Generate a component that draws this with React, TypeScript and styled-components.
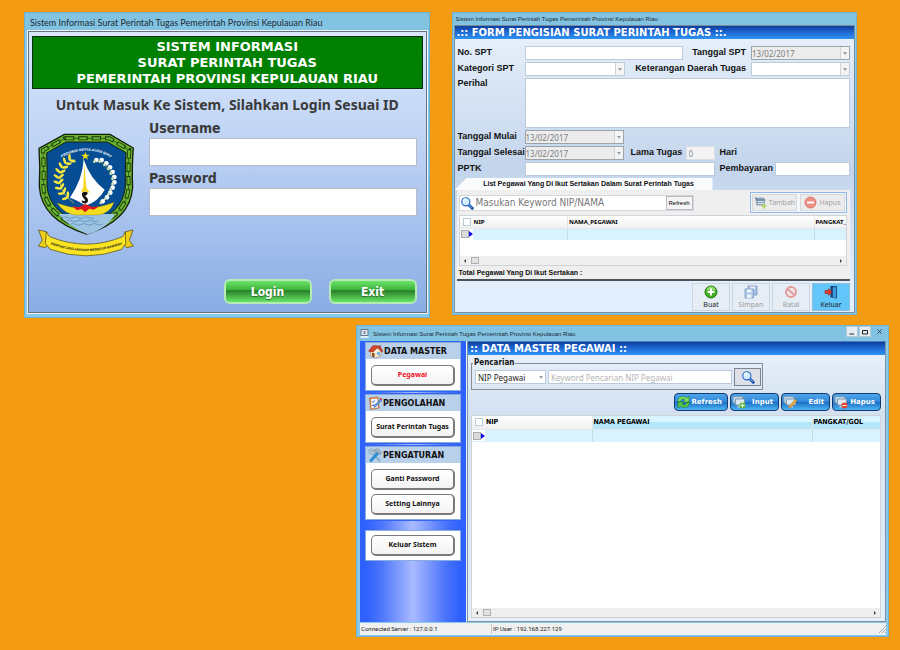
import React from 'react';
import styled, { createGlobalStyle } from 'styled-components';

const verdana = '"DejaVu Sans", Verdana, sans-serif';
const tahoma = '"DejaVu Sans Condensed", Tahoma, sans-serif';
const noto = '"Noto Sans", sans-serif';
const arial = '"Liberation Sans", Arial, sans-serif';

const Global = createGlobalStyle`
  * { box-sizing: border-box; }
  body { margin: 0; background: #f39c12; color: #111; font-family: ${arial}; }
  button, input, select, textarea { font-family: inherit; margin: 0; padding: 0; border-radius: 0; }
  fieldset { margin: 0; padding: 0; min-width: 0; }
  svg { display: block; flex: none; }
`;

/* ---------- desktop and window frames ---------- */

const Desktop = styled.main`
  min-height: 100vh;
  padding: 12px 11px 12px 24px;
  background: #f39c12;
`;
const TopRow = styled.div`
  display: grid;
  grid-template-columns: 1fr 1fr;
  align-items: start;
  gap: 22px;
  padding-right: 32px;
`;
const BottomRow = styled.div`
  padding: 7px 0 0 332px;
`;
const Window = styled.section`
  display: flex;
  flex-direction: column;
  min-width: 0;
  background: #87c9ea;
  border: 1px solid #6cb0d2;
`;
const TitleBar = styled.header<{ $large?: boolean }>`
  display: flex;
  align-items: center;
  height: ${p => (p.$large ? 18 : 12)}px;
  padding-left: ${p => (p.$large ? 5 : 3)}px;
  background: #83c3e2;
  color: #1c2a35;
  font-family: ${p => (p.$large ? 'Lato, sans-serif' : arial)};
  font-size: ${p => (p.$large ? 9 : 6)}px;
  white-space: nowrap;
`;
const BlueHeading = styled.h2`
  margin: 0;
  padding-left: 2px;
  height: 13px;
  background: linear-gradient(#0d3f9c, #1b61cd 40%, #2e94f5);
  color: #fff;
  font: bold 10px/14px ${verdana};
  white-space: pre;
`;

/* ---------- login window ---------- */

const LoginPane = styled.form`
  display: flex;
  flex-direction: column;
  margin: 0 2px 4px 3px;
  padding: 4px 3px 8px;
  border: 1px solid #66727f;
  outline: 1px solid #eef6fb;
  background: linear-gradient(#d9e7fb, #bdd2f4 42%, #8aade5);
`;
const Banner = styled.h1`
  margin: 0;
  padding: 2px 0 1px;
  border: 1px solid #0c2c0c;
  background: #008000;
  color: #fff;
  font: bold 13px/16px ${verdana};
  text-align: center;
`;
const Prompt = styled.p`
  margin: 6px 0 4px;
  color: #3a3a3a;
  font: bold 14px/20px ${noto};
  text-align: center;
  white-space: nowrap;
`;
const LoginBody = styled.div`
  display: grid;
  grid-template-columns: 98px 1fr;
  gap: 14px;
  padding: 0 6px 0 5px;
`;
const EmblemBox = styled.div`
  padding-top: 13px;
`;
const Credentials = styled.div`
  display: flex;
  flex-direction: column;
`;
const BigLabel = styled.label`
  color: #3a3a3a;
  font: bold 14px/19px ${tahoma};
`;
const BigInput = styled.input`
  width: 100%;
  height: 28px;
  margin-bottom: 3px;
  padding: 0 6px;
  border: 1px solid #b7bcc8;
  background: #fff;
  font-size: 14px;
`;
const LoginActions = styled.div`
  display: flex;
  justify-content: flex-end;
  gap: 17px;
  padding: 21px 6px 0 0;
`;
const GreenButton = styled.button`
  width: 88px;
  height: 25px;
  border: 2px solid #b5eab4;
  border-radius: 6px;
  background: linear-gradient(#6be36a, #3fb63f 40%, #2a7f2b 46%, #3a9a3a 60%, #66e465);
  color: #fff;
  font: bold 12px/18px ${tahoma};
  text-shadow: 0 1px 1px #2d6f2d;
`;

/* ---------- shared form parts ---------- */

const Row = styled.div<{ $top?: boolean }>`
  display: flex;
  align-items: ${p => (p.$top ? 'flex-start' : 'center')};
`;
const Label = styled.label<{ $w?: number; $fill?: boolean }>`
  flex: ${p => (p.$fill ? '1' : 'none')};
  width: ${p => (p.$w ? p.$w + 'px' : 'auto')};
  padding-right: ${p => (p.$fill ? 5 : 0)}px;
  padding-bottom: 2px;
  text-align: ${p => (p.$fill ? 'right' : 'left')};
  font: bold 9px/10px ${arial};
  white-space: nowrap;
`;
const Field = styled.input<{ $w?: number }>`
  flex: ${p => (p.$w ? 'none' : '1')};
  width: ${p => (p.$w ? p.$w + 'px' : 'auto')};
  min-width: 0;
  height: 14px;
  padding: 0 2px;
  border: 1px solid #bccada;
  background: #fff;
  font: 8px/12px ${noto};
  &:disabled { background: #f3f3f3; color: #8a8a8a; border-color: #dadfe6; }
`;
const Memo = styled.textarea`
  flex: 1;
  min-width: 0;
  height: 50px;
  border: 1px solid #bccada;
  background: #fff;
  font: 8px/12px ${noto};
  resize: none;
`;
const ComboBox = styled.span<{ $w: number; $date?: boolean }>`
  display: flex;
  flex: none;
  width: ${p => p.$w}px;
  height: 14px;
  border: 1px solid ${p => (p.$date ? '#9ba3ab' : '#bccada')};
  background: ${p => (p.$date ? '#ececec' : '#fff')};
`;
const ComboSelect = styled.select<{ $dark?: boolean }>`
  flex: 1;
  min-width: 0;
  padding-left: ${p => (p.$dark ? 2 : 0)}px;
  border: 0;
  appearance: none;
  background: transparent;
  color: ${p => (p.$dark ? '#222' : '#7d7d7d')};
  font: 8px/11px ${noto};
  opacity: 1;
`;
const ComboArrow = styled.span<{ $plain?: boolean }>`
  display: grid;
  place-items: center;
  width: 9px;
  border-left: ${p => (p.$plain ? '0' : '1px solid #cfd3d8')};
  background: ${p => (p.$plain ? 'transparent' : '#f4f4f4')};
`;

type ComboProps = { id: string; w: number; date?: boolean; value?: string; plain?: boolean; label?: string };
function Combo({ id, w, date, value, plain, label }: ComboProps) {
  return (
    <ComboBox $w={w} $date={date}>
      <ComboSelect id={id} aria-label={label} disabled={date} $dark={plain} defaultValue={value ?? ''}>
        <option>{value ?? ''}</option>
      </ComboSelect>
      <ComboArrow $plain={plain}>
        <svg width="4" height="3" viewBox="0 0 4 3"><path d="M0 0h4L2 3z" fill="#9a9fa4" /></svg>
      </ComboArrow>
    </ComboBox>
  );
}

/* ---------- assignment-letter form window ---------- */

const FormPane = styled.form`
  display: flex;
  flex-direction: column;
  margin: 0 1px 1px;
  border: 1px solid #7c8b99;
  background: linear-gradient(#e9f1fb, #c3d5ec 50%, #e2eefb 90%);
`;
const FormRows = styled.div`
  display: flex;
  flex-direction: column;
  gap: 2px;
  padding: 7px 4px 2px 3px;
`;
const Spacer = styled.span<{ $w?: number }>`
  flex: ${p => (p.$w ? 'none' : '1')};
  width: ${p => p.$w ?? 0}px;
`;
const Tab = styled.h3`
  width: 258px;
  height: 12px;
  margin: 0;
  padding: 0 0 0 10px;
  background: #fafbfc;
  clip-path: polygon(0 100%, 12px 0, 100% 0, 100% 100%);
  font: bold 7px/12px ${arial};
  text-align: center;
  white-space: nowrap;
`;
const TabPage = styled.div`
  display: flex;
  flex-direction: column;
  margin: 0 4px 0 2px;
  padding: 2px 3px 0 2px;
  background: #efefef;
  border-bottom: 2px solid #4a525a;
`;
const SearchRow = styled.div`
  display: flex;
  align-items: center;
  justify-content: space-between;
  margin-bottom: 2px;
`;
const SearchBox = styled.div`
  display: flex;
  align-items: center;
  width: 235px;
  height: 16px;
  border: 1px solid #d3d6da;
  background: #fff;
`;
const SearchInput = styled.input`
  flex: 1;
  min-width: 0;
  padding-left: 2px;
  border: 0;
  background: transparent;
  font: 10px/14px ${tahoma};
  &::placeholder { color: #777; opacity: 1; }
`;
const TinyButton = styled.button`
  width: 27px;
  height: 14px;
  border: 1px solid #b8bcc0;
  background: #f5f5f5;
  font: 6px/10px ${arial};
`;
const ButtonGroup = styled.div`
  display: flex;
  gap: 3px;
  padding: 1px;
  border: 1px solid #8fb8ee;
  background: #f3f6fa;
`;
const FlatButton = styled.button`
  display: flex;
  align-items: center;
  justify-content: center;
  gap: 2px;
  width: 45px;
  height: 17px;
  border: 1px solid #d6d9dd;
  background: #ececec;
  color: #a2a2a2;
  font: 7px/10px ${noto};
`;
const Total = styled.p`
  margin: 0;
  font: bold 7px/13px ${arial};
`;
const ActionBar = styled.div`
  display: flex;
  justify-content: flex-end;
  gap: 2px;
  padding: 2px 4px 1px 0;
`;
const ActionButton = styled.button<{ $active?: boolean }>`
  display: flex;
  flex-direction: column;
  align-items: center;
  justify-content: space-between;
  width: 38px;
  height: 28px;
  padding: 1px 0 1px;
  border: 1px solid ${p => (p.$active ? '#8dbdd9' : '#cdd6df')};
  background: ${p => (p.$active ? '#63c6fa' : '#e6edf4')};
  color: #222;
  font: 7px/9px ${noto};
  &:disabled { color: #9a9fa5; }
  &:disabled svg { opacity: 0.5; }
`;

/* ---------- data grids ---------- */

const GridBox = styled.div<{ $grow?: boolean }>`
  display: flex;
  flex-direction: column;
  justify-content: space-between;
  height: ${p => (p.$grow ? 203 : 51)}px;
  border: 1px solid #cfd4d9;
  background: #fff;
`;
const Table = styled.table<{ $large?: boolean }>`
  width: 100%;
  table-layout: fixed;
  border-collapse: collapse;
  color: #000;
  font: bold ${p => (p.$large ? 7 : 6)}px/10px ${p => (p.$large ? tahoma : noto)};
  th, td { height: ${p => (p.$large ? 13 : 12)}px; padding: 0 0 0 1px; text-align: left; white-space: nowrap; }
  th { background: linear-gradient(#fff, #f0f0f0); border-right: 1px solid #e4e6e8; border-bottom: 1px solid #e2e8ec; }
  td { background: #d8f2fe; border-right: 1px solid #c3dbe6; }
  th:last-child, td:last-child { border-right: 0; }
`;
const HotHeader = styled.th`
  && { background: linear-gradient(#d9f4ff 45%, #b5e7fb 50%); }
`;
const Marker = styled.span`
  display: flex;
  align-items: center;
  gap: 3px;
  padding-left: 2px;
`;
const Tick = styled.input<{ $muted?: boolean }>`
  appearance: none;
  flex: none;
  width: 8px;
  height: 8px;
  border: 1px solid ${p => (p.$muted ? '#a9adb2' : '#b9cdd4')};
  background: ${p => (p.$muted ? '#dcdcdc' : '#fff')};
`;
const Cell = styled.div`
  display: flex;
  align-items: center;
  width: 13px;
  margin-left: -1px;
  padding-left: 1px;
  height: 11px;
  background: #fff;
`;
const Cols = styled.col<{ $w?: number }>`
  width: ${p => (p.$w ? p.$w + 'px' : 'auto')};
`;
const ScrollTrack = styled.div`
  display: flex;
  align-items: center;
  gap: 5px;
  height: 9px;
  padding: 0 4px;
  background: #efefef;
`;
const Thumb = styled.span`
  width: 8px;
  height: 7px;
  border: 1px solid #b0b0b0;
  background: #e2e2e2;
`;
const Scrollbar = () => (
  <ScrollTrack>
    <svg width="2" height="4" viewBox="0 0 2 4"><path d="M2 0v4L0 2z" fill="#444" /></svg>
    <Thumb />
    <Spacer />
    <svg width="2" height="4" viewBox="0 0 2 4"><path d="M0 0v4l2-2z" fill="#444" /></svg>
  </ScrollTrack>
);
const RowPointer = () => <svg width="4" height="6" viewBox="0 0 4 6"><path d="M0 0l4 3-4 3z" fill="#1010e8" /></svg>;

function DataGrid({ large, heads, widths }: { large?: boolean; heads: string[]; widths: number[] }) {
  return (
    <GridBox $grow={large}>
      <Table $large={large}>
        <colgroup><Cols $w={widths[0]} /><Cols /><Cols $w={widths[1]} /></colgroup>
        <thead>
          <tr>
            <th><Marker><Tick type="checkbox" aria-label="Pilih semua" />{heads[0]}</Marker></th>
            {large ? <HotHeader>{heads[1]}</HotHeader> : <th>{heads[1]}</th>}
            {large ? <HotHeader>{heads[2]}</HotHeader> : <th>{heads[2]}</th>}
          </tr>
        </thead>
        <tbody>
          <tr>
            <td><Cell><Tick $muted type="checkbox" aria-label="Pilih baris" /><RowPointer /></Cell></td>
            <td /><td />
          </tr>
        </tbody>
      </Table>
      <Scrollbar />
    </GridBox>
  );
}

/* ---------- main window ---------- */

const MainTitle = styled(TitleBar)`
  height: 15px;
  gap: 4px;
  padding: 0 2px 0 3px;
`;
const Caption = styled.span`
  flex: 1;
`;
const CaptionButton = styled.button<{ $flat?: boolean }>`
  display: grid;
  place-items: center;
  align-self: flex-start;
  width: ${p => (p.$flat ? 14 : 12)}px;
  height: 11px;
  margin-left: -3px;
  border: ${p => (p.$flat ? '0' : '1px solid #b8cbd6')};
  background: ${p => (p.$flat ? 'transparent' : '#e4edf2')};
`;
const Workspace = styled.div`
  display: grid;
  grid-template-columns: 106px 1fr;
  gap: 1px;
  margin: 0 2px 0 3px;
  background: #e8f3fb;
`;
const Sidebar = styled.nav`
  display: flex;
  flex-direction: column;
  gap: 3px;
  padding: 1px 5px 0;
  background: linear-gradient(90deg, #2d60fd 5%, #4c75fb 20%, #a9baff 50%, #4c75fb 80%, #2d60fd 95%);
`;
const MenuGroup = styled.section<{ $apart?: boolean }>`
  display: flex;
  flex-direction: column;
  margin-top: ${p => (p.$apart ? 7 : 0)}px;
  padding-bottom: 4px;
  border: 1px solid #86abe0;
  background: #fff;
  box-shadow: ${p => (p.$apart ? 'none' : '0 0 0 1px #3364f4')};
`;
const MenuTitle = styled.h3`
  display: flex;
  align-items: center;
  gap: 1px;
  height: 16px;
  margin: 0 0 2px;
  padding-left: 2px;
  background: #b9d0ea;
  font: bold 8px/12px ${verdana};
  white-space: nowrap;
`;
const MenuName = styled.span`
  padding-top: 2px;
`;
const MenuButton = styled.button<{ $current?: boolean }>`
  height: 21px;
  margin: 4px 5px 0;
  border: 1px solid #7a7a7a;
  border-right-width: 2px;
  border-bottom-width: 2px;
  border-radius: 5px;
  background: linear-gradient(#fff, #f3f3f3);
  color: ${p => (p.$current ? '#f20d1c' : '#111')};
  font: bold 7px/12px ${noto};
  white-space: nowrap;
`;
const Content = styled.section`
  display: flex;
  flex-direction: column;
  min-width: 0;
  padding-bottom: 3px;
  border: 1px solid #7d91a5;
  border-top-color: #4a7cc0;
  background: linear-gradient(#eaf2fb, #d4e1f1 70px, #e4effa);
`;
const ContentBody = styled.div`
  padding: 3px 4px 0 3px;
`;
const SearchSet = styled.fieldset`
  display: block;
  width: 292px;
  height: 32px;
  border: 1px solid #858f98;
`;
const Legend = styled.legend`
  margin-left: 1px;
  padding: 0 1px;
  font: bold 8px/10px ${tahoma};
`;
const SearchLine = styled.div`
  display: flex;
  align-items: center;
  gap: 2px;
  margin-left: 3px;
`;
const KeywordInput = styled(Field)`
  &::placeholder { color: #b5b5b5; opacity: 1; }
`;
const FindButton = styled.button`
  display: grid;
  place-items: center;
  width: 27px;
  height: 18px;
  margin-right: 1px;
  border: 1px solid #7b858f;
  background: #dde0e6;
`;
const Toolbar = styled.div`
  display: flex;
  justify-content: flex-end;
  gap: 2px;
  margin: 3px 0 4px;
`;
const GlossButton = styled.button<{ $wide?: boolean }>`
  display: flex;
  align-items: center;
  justify-content: space-between;
  width: ${p => (p.$wide ? 54 : 49)}px;
  height: 18px;
  padding: 0 5px 0 1px;
  border: 1px solid #123c70;
  border-radius: 4px;
  background: linear-gradient(#4fa5ea, #2f88d9 48%, #1b6ec4 52%, #4db4f5);
  color: #fff;
  font: bold 7px/12px ${verdana};
`;
const StatusBar = styled.footer`
  display: grid;
  grid-template-columns: 132px 1fr auto;
  align-items: center;
  height: 12px;
  margin: 1px 2px 1px 3px;
  background: #f0f0f0;
  color: #222;
  font: 6px/10px Roboto, sans-serif;
`;
const StatusPart = styled.span`
  padding-left: 1px;
  border-right: 1px solid #c8c8c8;
  & + & { border-right: 0; }
`;

/* ---------- icons ---------- */

const Magnifier = ({ s }: { s: number }) => (
  <svg width={s} height={s} viewBox="0 0 24 24">
    <path d="M14 14l7 7" stroke="#17439c" strokeWidth="5" strokeLinecap="round" />
    <path d="M15 15l5 5" stroke="#58a8ee" strokeWidth="2" strokeLinecap="round" />
    <circle cx="10" cy="10" r="7" fill="#d4efff" stroke="#2a68c8" strokeWidth="2" />
    <path d="M6 9a4 4 0 014-4" fill="none" stroke="#fff" strokeWidth="2" />
  </svg>
);
const HouseIcon = () => (
  <svg width="15" height="13" viewBox="0 0 30 26">
    <path d="M5 11v11l10 4 11-5V10L16 5z" fill="#fbe9cf" stroke="#96603a" />
    <path d="M1 12L10 1l13 1 7 10-3 2-8-9-9 9-8-1z" fill="#d5442c" stroke="#8b2318" />
    <path d="M22 1h4v5h-4z" fill="#a44" />
    <path d="M8 16h5v9l-5-2z" fill="#8b4a20" /><path d="M18 14h6v6h-6z" fill="#6cb4ea" />
  </svg>
);
const NoteIcon = () => (
  <svg width="14" height="14" viewBox="0 0 28 28">
    <path d="M3 4l17-2 2 22-17 3z" fill="#e4873a" stroke="#99501c" />
    <path d="M6 6l13-1 1 18-13 2z" fill="#f4f8ff" />
    <path d="M8 11l2 2 3-4M8 18l2 2 3-4" stroke="#3164c0" strokeWidth="2" fill="none" />
    <path d="M26 5l2 3-12 13-4 2 1-4z" fill="#5aa0ea" stroke="#28599c" /><path d="M24 4l4 4" stroke="#d33" strokeWidth="3" />
  </svg>
);
const ToolsIcon = () => (
  <svg width="14" height="14" viewBox="0 0 28 28">
    <path d="M8 9l15 16" stroke="#8fb2cc" strokeWidth="5" strokeLinecap="round" />
    <path d="M2 10V4l5-3-1 5 4 1 2-4 3 6-5 4z" fill="#b9cfdf" stroke="#638aa5" />
    <path d="M20 10L6 25" stroke="#2f8fd6" strokeWidth="6" strokeLinecap="round" />
    <path d="M12 4l7-3 8 7-3 6-5-6-5 1z" fill="#a7b7c4" stroke="#617c90" />
  </svg>
);
const RefreshIcon = () => (
  <svg width="15" height="14" viewBox="0 0 28 28">
    <path d="M2 13C3 3 14 0 20 6l5-4v12H13l4-4C13 6 9 8 8 13z" fill="#84e05a" stroke="#166b1b" />
    <path d="M26 15c-1 10-12 13-18 7l-5 4V14h12l-4 4c4 4 8 2 9-3z" fill="#58cc45" stroke="#166b1b" />
  </svg>
);
const RecordIcon = ({ kind }: { kind: 'add' | 'edit' | 'remove' }) => (
  <svg width="14" height="14" viewBox="0 0 28 28">
    <path d="M2 3h19v13H2z" fill="#b6d8f2" stroke="#8298ac" strokeWidth="2" />
    <path d="M7 8h18v12H7z" fill="#dce9f3" stroke="#8298ac" strokeWidth="2" />
    <path d="M12 21h8v4H10z" fill="#c4ccd4" />
    {kind === 'add' && <><circle cx="21" cy="21" r="6" fill="#58b82e" /><path d="M21 17v8M17 21h8" stroke="#fff" strokeWidth="2" /></>}
    {kind === 'edit' && <path d="M25 8L13 22l-2 4 4-1L28 12z" fill="#f4b03c" stroke="#935b17" />}
    {kind === 'remove' && <><circle cx="21" cy="21" r="6" fill="#e5412d" /><path d="M17 21h8" stroke="#fff" strokeWidth="2" /></>}
  </svg>
);
const PlusIcon = () => (
  <svg width="14" height="14" viewBox="0 0 28 28">
    <circle cx="14" cy="14" r="12" fill="#3fae22" stroke="#1f7a12" strokeWidth="2" />
    <path d="M5 11a9 8 0 0118 0z" fill="#8edc6c" /><path d="M14 7v14M7 14h14" stroke="#fff" strokeWidth="4" />
  </svg>
);
const DisksIcon = () => (
  <svg width="14" height="14" viewBox="0 0 28 28">
    <path d="M8 2h18v18H8z" fill="#5c93d4" stroke="#2f5f9e" strokeWidth="2" /><path d="M12 3h10v6H12z" fill="#eef" />
    <path d="M2 8h17v18H2z" fill="#6ea3de" stroke="#2f5f9e" strokeWidth="2" /><path d="M6 9h9v6H6zM6 19h9v7H6z" fill="#f4f7fc" />
  </svg>
);
const BanIcon = () => (
  <svg width="14" height="14" viewBox="0 0 28 28">
    <circle cx="14" cy="14" r="10" fill="#fbe3e1" stroke="#dd4b44" strokeWidth="4" /><path d="M7 8l14 12" stroke="#dd4b44" strokeWidth="4" />
  </svg>
);
const DoorIcon = () => (
  <svg width="14" height="14" viewBox="0 0 28 28">
    <path d="M13 2h13v23H13z" fill="#173c66" /><path d="M17 5l8-3v25l-8-3z" fill="#3d9be2" stroke="#153a63" />
    <path d="M2 11h7V7l7 7-7 7v-4H2z" fill="#e6372a" stroke="#8b1c14" />
  </svg>
);
const MinusIcon = () => (
  <svg width="13" height="13" viewBox="0 0 26 26"><circle cx="13" cy="13" r="11" fill="#ee8f86" stroke="#dd776e" strokeWidth="2" /><path d="M6 13h14" stroke="#fff" strokeWidth="4" /></svg>
);
const CartIcon = () => (
  <svg width="13" height="13" viewBox="0 0 26 26">
    <path d="M2 3h17l3 3v13H5z" fill="#8ea5ba" /><path d="M2 3l4 5h17" fill="none" stroke="#617e98" strokeWidth="2" />
    <path d="M8 11h12M8 15h12" stroke="#d9e4ee" strokeWidth="2" /><path d="M20 15v10M15 20h10" stroke="#b8d374" strokeWidth="4" />
  </svg>
);
const AppIcon = () => (
  <svg width="9" height="9" viewBox="0 0 18 18"><path d="M2 1h14v12H2z" fill="#dfe8ee" stroke="#667684" strokeWidth="2" /><path d="M7 4h4v6H7z" fill="#7890a4" /><path d="M1 16h16" stroke="#f8fbfd" strokeWidth="3" /></svg>
);

const wheat = [[134, 122], [121, 132], [111, 145], [104, 160], [101, 176], [102, 192], [107, 208], [116, 222], [128, 235]];
const cotton = [[214, 122], [230, 122], [244, 132], [255, 144], [263, 158], [268, 173], [268, 189], [263, 205], [256, 220], [246, 234], [233, 246]];
const chain = 'M120 57h133l60 35q-4 60-2 110-6 91-126 129Q62 292 55 202q2-55-1-109z';
const Emblem = () => (
  <svg width="98" height="126" viewBox="36 38 294 378" role="img" aria-label="Lambang provinsi">
    <defs>
      <path id="arcTop" d="M98 122Q184 66 270 122" />
      <path id="arcRibbon" d="M72 373Q184 417 296 373" />
    </defs>
    <path d="M118 45h137l70 41q-5 62-2 117-6 101-138 141Q49 302 43 202q3-60-1-115z" fill="#6ab42f" stroke="#14200d" strokeWidth="4" />
    <path d={chain} fill="none" stroke="#1a330c" strokeWidth="12" strokeDasharray="28 12" />
    <path d={chain} fill="none" stroke="#6ab42f" strokeWidth="7" strokeDasharray="22 18" strokeDashoffset="-3" />
    <path d={chain} fill="none" stroke="#1a330c" strokeWidth="2" strokeDasharray="16 24" strokeDashoffset="-26" />
    <path d="M123 68h124l56 32q-3 50-2 102-7 82-116 118Q74 283 66 202q1-50-1-101z" fill="#064d93" stroke="#14200d" strokeWidth="3" />
    <text fill="#fff" fontFamily="Liberation Sans, sans-serif" fontWeight="bold" fontSize="11"><textPath href="#arcTop" startOffset="50%" textAnchor="middle">PROVINSI KEPULAUAN RIAU</textPath></text>
    <path d="M181 97l3 9h10l-8 6 3 9-8-6-8 6 3-9-8-6h10z" fill="#f7dc18" />
    <path d="M150 120Q62 186 146 251" fill="none" stroke="#f2df33" strokeWidth="2" />
    {wheat.map(([x, y], i) => (
      <g key={i} transform={`translate(${x} ${y}) rotate(${52 - i * 13})`}>
        <ellipse cx="-8" rx="10" ry="4" transform="rotate(35)" fill="#f6e83e" /><ellipse cx="9" rx="10" ry="4" transform="rotate(-35)" fill="#f6e83e" />
      </g>
    ))}
    <path d="M218 120Q307 183 229 250" fill="none" stroke="#51913d" strokeWidth="3" />
    {cotton.map(([x, y], i) => <g key={i}><circle cx={x} cy={y} r="7" fill="#fff" /><circle cx={x - 6} cy={y + 5} r="4" fill="#e4f0df" stroke="#397738" strokeWidth="1" /></g>)}
    <path d="M176 120Q196 180 239 211q-18 35-58 48-18-14-46-24 38-55 41-115z" fill="#fff" />
    <path d="M178 135l6 70 11 15-14-4-12 3 6-18z" fill="#f6d51a" />
    <path d="M171 221q10-7 18 0-5 8-9 10 12 6 8 17-8 9-17 1l-1-6 8 3q5-3-1-8-8-8-6-17z" fill="#15120f" />
    <path d="M100 284h170q-11 24-38 41-20 14-45 20-58-25-87-61z" fill="#9cc3e2" />
    {[295, 305, 315].map((y, i) => <path key={y} d={`M${112 + i * 12} ${y}q8-5 16 0t16 0 16 0 16 0 16 0 16 0`} fill="none" stroke="#4f86b6" strokeWidth="2" />)}
    <path d="M96 251q82 32 172-2-16 36-49 38h-67q-33-3-56-36z" fill="#f3dc1d" stroke="#806816" />
    <path d="M141 261l21 3 19-10 21 9 21-2-17 10-13-3-13 11-11-10-13 4z" fill="#df1723" />
    <path d="M41 332l22 5 14 31-16 17-21-5 12-17zM324 332l-22 5-11 31 14 17 20-5-12-17z" fill="#edce1b" stroke="#49400e" strokeWidth="2" />
    <path d="M64 337l10 15q111 45 219 0l8-15 1 36-12 17q-107 39-214 0l-15-17z" fill="#fae424" stroke="#49400e" strokeWidth="2" />
    <text fill="#242012" fontFamily="Liberation Sans, sans-serif" fontWeight="bold" fontSize="10"><textPath href="#arcRibbon" startOffset="50%" textAnchor="middle">BERPANCANG AMANAH BERSAUH MARWAH</textPath></text>
  </svg>
);

/* ---------- windows ---------- */

const APP = 'Sistem Informasi Surat Perintah Tugas Pemerintah Provinsi Kepulauan Riau';
const stop = (e: React.FormEvent) => e.preventDefault();

const LoginWindow = () => (
  <Window>
    <TitleBar $large>{APP}</TitleBar>
    <LoginPane onSubmit={stop}>
      <Banner>SISTEM INFORMASI<br />SURAT PERINTAH TUGAS<br />PEMERINTAH PROVINSI KEPULAUAN RIAU</Banner>
      <Prompt>Untuk Masuk Ke Sistem, Silahkan Login Sesuai ID</Prompt>
      <LoginBody>
        <EmblemBox><Emblem /></EmblemBox>
        <Credentials>
          <BigLabel htmlFor="user">Username</BigLabel>
          <BigInput id="user" />
          <BigLabel htmlFor="pass">Password</BigLabel>
          <BigInput id="pass" type="password" />
        </Credentials>
      </LoginBody>
      <LoginActions>
        <GreenButton type="submit">Login</GreenButton>
        <GreenButton type="button">Exit</GreenButton>
      </LoginActions>
    </LoginPane>
  </Window>
);

const FormWindow = () => (
  <Window>
    <TitleBar>{APP}</TitleBar>
    <FormPane onSubmit={stop}>
      <BlueHeading>.:: FORM PENGISIAN SURAT PERINTAH TUGAS ::.</BlueHeading>
      <FormRows>
        <Row>
          <Label $w={67} htmlFor="no">No. SPT</Label><Field id="no" $w={158} />
          <Label $fill htmlFor="tgl">Tanggal SPT</Label><Combo id="tgl" w={99} date value="13/02/2017" />
        </Row>
        <Row>
          <Label $w={67} htmlFor="kat">Kategori SPT</Label><Combo id="kat" w={100} />
          <Label $fill htmlFor="ket">Keterangan Daerah Tugas</Label><Combo id="ket" w={99} />
        </Row>
        <Row $top><Label $w={67} htmlFor="hal">Perihal</Label><Memo id="hal" /></Row>
        <Row><Label $w={67} htmlFor="mulai">Tanggal Mulai</Label><Combo id="mulai" w={99} date value="13/02/2017" /></Row>
        <Row>
          <Label $w={67} htmlFor="selesai">Tanggal Selesai</Label><Combo id="selesai" w={99} date value="13/02/2017" />
          <Spacer $w={7} /><Label $w={55} htmlFor="lama">Lama Tugas</Label><Field id="lama" $w={29} disabled defaultValue="0" />
          <Spacer $w={5} /><Label as="span">Hari</Label>
        </Row>
        <Row>
          <Label $w={67} htmlFor="pptk">PPTK</Label><Field id="pptk" $w={190} />
          <Spacer $w={5} /><Label $w={55} htmlFor="bayar">Pembayaran</Label><Field id="bayar" />
        </Row>
      </FormRows>
      <Tab>List Pegawai Yang Di Ikut Sertakan Dalam Surat Perintah Tugas</Tab>
      <TabPage>
        <SearchRow>
          <SearchBox>
            <Magnifier s={14} />
            <SearchInput aria-label="Kata kunci" placeholder="Masukan Keyword NIP/NAMA" />
            <TinyButton type="button">Refresh</TinyButton>
          </SearchBox>
          <ButtonGroup>
            <FlatButton type="button" disabled><CartIcon />Tambah</FlatButton>
            <FlatButton type="button" disabled><MinusIcon />Hapus</FlatButton>
          </ButtonGroup>
        </SearchRow>
        <DataGrid heads={['NIP', 'NAMA_PEGAWAI', 'PANGKAT_']} widths={[108, 32]} />
        <Total>Total Pegawai Yang Di Ikut Sertakan :</Total>
      </TabPage>
      <ActionBar>
        <ActionButton type="button"><PlusIcon />Buat</ActionButton>
        <ActionButton type="button" disabled><DisksIcon />Simpan</ActionButton>
        <ActionButton type="button" disabled><BanIcon />Batal</ActionButton>
        <ActionButton type="button" $active><DoorIcon />Keluar</ActionButton>
      </ActionBar>
    </FormPane>
  </Window>
);

const MainWindow = () => (
  <Window>
    <MainTitle>
      <AppIcon />
      <Caption>{APP}</Caption>
      <CaptionButton aria-label="Minimize"><svg width="6" height="6" viewBox="0 0 12 12"><path d="M1 10h9" stroke="#222" strokeWidth="2" /></svg></CaptionButton>
      <CaptionButton aria-label="Maximize"><svg width="6" height="6" viewBox="0 0 12 12"><path d="M1 3h10v7H1z" fill="none" stroke="#222" strokeWidth="2" /></svg></CaptionButton>
      <CaptionButton $flat aria-label="Close"><svg width="5" height="5" viewBox="0 0 10 10"><path d="M1 1l8 8m0-8l-8 8" stroke="#345" strokeWidth="2" /></svg></CaptionButton>
    </MainTitle>
    <Workspace>
      <Sidebar>
        <MenuGroup>
          <MenuTitle><HouseIcon /><MenuName>DATA MASTER</MenuName></MenuTitle>
          <MenuButton $current>Pegawai</MenuButton>
        </MenuGroup>
        <MenuGroup>
          <MenuTitle><NoteIcon /><MenuName>PENGOLAHAN</MenuName></MenuTitle>
          <MenuButton>Surat Perintah Tugas</MenuButton>
        </MenuGroup>
        <MenuGroup>
          <MenuTitle><ToolsIcon /><MenuName>PENGATURAN</MenuName></MenuTitle>
          <MenuButton>Ganti Password</MenuButton>
          <MenuButton>Setting Lainnya</MenuButton>
        </MenuGroup>
        <MenuGroup $apart><MenuButton>Keluar Sistem</MenuButton></MenuGroup>
      </Sidebar>
      <Content>
        <BlueHeading>:: DATA MASTER PEGAWAI ::</BlueHeading>
        <ContentBody>
          <SearchSet>
            <Legend>Pencarian</Legend>
            <SearchLine>
              <Combo id="by" label="Kolom pencarian" w={71} value="NIP Pegawai" plain />
              <KeywordInput aria-label="Keyword" placeholder="Keyword Pencarian NIP Pegawai" />
              <FindButton aria-label="Cari"><Magnifier s={14} /></FindButton>
            </SearchLine>
          </SearchSet>
          <Toolbar>
            <GlossButton $wide><RefreshIcon />Refresh</GlossButton>
            <GlossButton><RecordIcon kind="add" />Input</GlossButton>
            <GlossButton><RecordIcon kind="edit" />Edit</GlossButton>
            <GlossButton><RecordIcon kind="remove" />Hapus</GlossButton>
          </Toolbar>
          <DataGrid large heads={['NIP', 'NAMA PEGAWAI', 'PANGKAT/GOL']} widths={[120, 68]} />
        </ContentBody>
      </Content>
    </Workspace>
    <StatusBar>
      <StatusPart>Connected Server : 127.0.0.1</StatusPart>
      <StatusPart>IP User : 192.168.227.129</StatusPart>
      <svg width="8" height="8" viewBox="0 0 8 8"><path d="M1 8l7-7M4 8l4-4M7 8l1-1" stroke="#9aa" /></svg>
    </StatusBar>
  </Window>
);

export default function App() {
  return (
    <>
      <Global />
      <Desktop>
        <TopRow><LoginWindow /><FormWindow /></TopRow>
        <BottomRow><MainWindow /></BottomRow>
      </Desktop>
    </>
  );
}
